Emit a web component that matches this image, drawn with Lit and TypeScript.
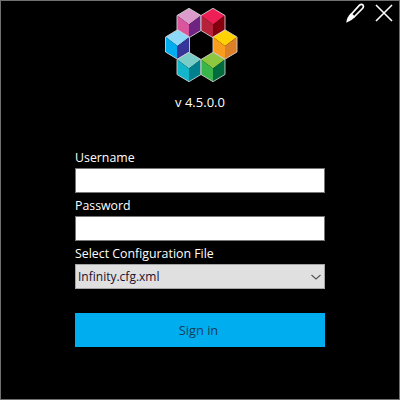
import { LitElement, html, css, svg } from "lit";
import { customElement } from "lit/decorators.js";

const cubes = [
  { x: 189, y: 22, top: "#dc9ccb", left: "#d9569f", right: "#6f2484" },
  { x: 213, y: 22, top: "#ee1f55", left: "#b8213a", right: "#85000f" },
  { x: 177.5, y: 43.5, top: "#8ed8f8", left: "#00aeef", right: "#36359a" },
  { x: 225, y: 43.5, top: "#ffd204", left: "#f99d1c", right: "#dd7f26" },
  { x: 189, y: 66, top: "#78cdc8", left: "#13b5cb", right: "#007f8c" },
  { x: 213, y: 66, top: "#8dc63f", left: "#39b54a", right: "#006b3d" },
];

function cube(c: (typeof cubes)[number]) {
  const hw = 12;
  const r = 14.7;
  const q = 7.5;
  const { x, y } = c;
  const m = y + 1.5;
  const t = `${x},${y - r} ${x + hw},${y - q} ${x + hw},${y + q} ${x},${y + r} ${x - hw},${y + q} ${x - hw},${y - q}`;
  return svg`
    <polygon points="${x},${y - r} ${x + hw},${y - q} ${x},${m} ${x - hw},${y - q}" fill=${c.top} />
    <polygon points="${x - hw},${y - q} ${x},${m} ${x},${y + r} ${x - hw},${y + q}" fill=${c.left} />
    <polygon points="${x + hw},${y - q} ${x},${m} ${x},${y + r} ${x + hw},${y + q}" fill=${c.right} />
    <polygon points=${t} fill="none" stroke="#d0d0d0" stroke-width="0.9" />
  `;
}

@customElement("app-root")
export class AppRoot extends LitElement {
  static styles = css`
    :host {
      display: block;
      width: 400px;
      height: 400px;
    }
    .window {
      box-sizing: border-box;
      width: 400px;
      height: 400px;
      background: #000;
      border: 1px solid #707070;
      position: relative;
      display: flex;
      flex-direction: column;
      align-items: center;
      font-family: "Open Sans", "Noto Sans", sans-serif;
      font-size: 12px;
      color: #fff;
    }
    .actions {
      position: absolute;
      top: 1px;
      right: 6px;
      display: flex;
      gap: 10px;
      align-items: flex-start;
    }
    .close {
      margin-top: 2px;
    }
    .logo {
      display: block;
      margin-top: 4px;
      width: 80px;
      height: 80px;
    }
    .version {
      margin-top: 9px;
      line-height: 17px;
      height: 17px;
      font-size: 13px;
    }
    form {
      width: 250px;
      margin-top: 37px;
      display: flex;
      flex-direction: column;
    }
    label {
      line-height: 20px;
      height: 20px;
      font-size: 12.35px;
    }
    .input {
      box-sizing: border-box;
      height: 25px;
      margin-bottom: 3px;
      background: #fff;
      border: 1px solid #767676;
    }
    .select {
      box-sizing: border-box;
      height: 25px;
      background: #e0e0e0;
      border: 1px solid #a5a5a5;
      color: #20102c;
      display: flex;
      align-items: center;
      justify-content: space-between;
      padding: 0 3px 0 2px;
    }
    .button {
      box-sizing: border-box;
      margin-top: 24px;
      height: 34px;
      padding-right: 3px;
      background: #00adef;
      color: #15405a;
      font-size: 12.8px;
      display: flex;
      align-items: center;
      justify-content: center;
    }
  `;

  render() {
    return html`
      <div class="window">
        <div class="actions">
          <svg width="22" height="22" viewBox="0 0 22 22" fill="none" stroke="#fff">
            <path d="M16.5 3.2 Q18.5 1.6 20 3 Q21 5 19.5 6.5 L11 15 L8.5 12 Z" stroke-width="1.7" />
            <path d="M7.5 11.5 L11.5 15.5 Q9 18.5 3.2 20.8 Q4 15 7.5 11.5 Z" fill="#fff" stroke="none" />
          </svg>
          <svg class="close" width="18" height="18" viewBox="0 0 18 18" stroke="#fff" stroke-width="1.6">
            <path d="M1 1 L17 17 M17 1 L1 17" />
          </svg>
        </div>
        <svg class="logo" viewBox="160 4 80 80">${cubes.map(cube)}</svg>
        <div class="version">v 4.5.0.0</div>
        <form>
          <label>Username</label>
          <div class="input"></div>
          <label>Password</label>
          <div class="input"></div>
          <label>Select Configuration File</label>
          <div class="select">
            <span>Infinity.cfg.xml</span>
            <svg width="10" height="6" viewBox="0 0 10 6" fill="none" stroke="#555" stroke-width="1.1">
              <path d="M0.5 1 L5 5 L9.5 1" />
            </svg>
          </div>
          <div class="button">Sign in</div>
        </form>
      </div>
    `;
  }
}
